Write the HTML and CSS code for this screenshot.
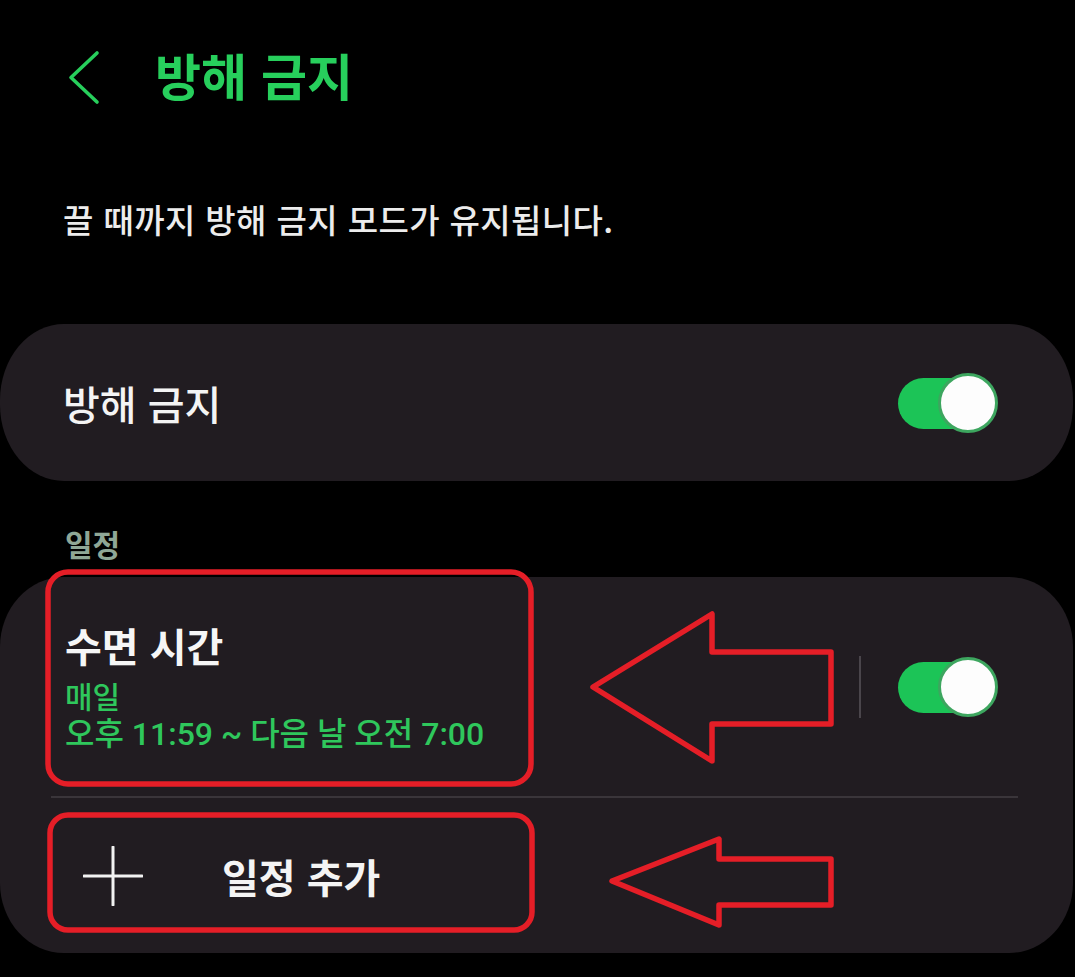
FILE: index.html
```html
<!DOCTYPE html>
<html lang="ko">
<head>
<meta charset="utf-8">
<title>방해 금지</title>
<link rel="stylesheet" href="styles.css">
</head>
<body>
<div class="page">
  <header class="appbar">
    <svg class="back" width="36" height="56" viewBox="0 0 36 56">
      <path d="M33 3 L7 27.5 L33 52" fill="none" stroke="#27cf5c" stroke-width="3.6" stroke-linecap="round" stroke-linejoin="round"/>
    </svg>
    <h1 class="title">방해 금지</h1>
  </header>

  <p class="desc">끌 때까지 방해 금지 모드가 유지됩니다.</p>

  <section class="card card-main">
    <span class="main-label">방해 금지</span>
    <span class="toggle"><span class="thumb"></span></span>
  </section>

  <h2 class="section">일정</h2>

  <section class="card card-sched">
    <div class="sched-row">
      <div class="sched-text">
        <div class="sched-title">수면 시간</div>
        <div class="sched-days">매일</div>
        <div class="sched-time">오후 11:59 ~ 다음 날 오전 7:00</div>
      </div>
      <div class="sched-ctrl">
        <span class="vdiv"></span>
        <span class="toggle"><span class="thumb"></span></span>
      </div>
    </div>
    <div class="hdiv"></div>
    <div class="add-row">
      <svg class="plus" width="60" height="60" viewBox="0 0 60 60">
        <path d="M30 1 V59 M1 30 H59" stroke="#f2f2f2" stroke-width="3" stroke-linecap="round"/>
      </svg>
      <span class="add-label">일정 추가</span>
    </div>
  </section>

  <svg class="annot" width="1075" height="977" viewBox="0 0 1075 977">
    <g fill="none" stroke="#e51e27" stroke-width="5.5" stroke-linejoin="round">
      <rect x="48" y="572" width="483" height="212" rx="20"/>
      <rect x="50" y="815" width="482" height="115" rx="18"/>
      <polygon points="593,687 712,614 712,652 831,652 831,724 712,724 712,761"/>
      <polygon points="612,881 719,839 719,859 831,859 831,905 719,905 719,925"/>
    </g>
  </svg>
</div>
</body>
</html>
```

FILE: styles.css
```css
html, body {
  margin: 0;
  padding: 0;
  background: #000;
}
body {
  font-family: Roboto, "Noto Sans CJK KR", sans-serif;
  color: #f2f2f2;
}
.page {
  position: relative;
  width: 1075px;
  height: 977px;
  overflow: hidden;
}
.appbar {
  height: 156px;
  display: flex;
  align-items: center;
  padding-left: 64px;
}
.back {
  display: block;
  flex: none;
}
.title {
  margin: 0 0 8px 55px;
  font-family: "Noto Sans CJK KR", sans-serif;
  font-size: 50px;
  font-weight: 700;
  letter-spacing: 0;
  color: #27cf5c;
  line-height: 56px;
}
.desc {
  margin: 41px 0 0 0;
  padding-left: 63px;
  font-family: "Noto Sans CJK KR", sans-serif;
  font-size: 33px;
  letter-spacing: 0.4px;
  line-height: 44px;
  font-weight: 500;
  color: #ececec;
}
.card {
  background: #211c21;
  width: 1073px;
  box-sizing: border-box;
}
.card-main {
  margin-top: 83px;
  height: 157px;
  border-radius: 64px / 76px;
  display: flex;
  align-items: center;
  justify-content: space-between;
  padding: 0 75px 0 63px;
}
.main-label {
  font-family: "Noto Sans CJK KR", sans-serif;
  font-size: 40px;
  font-weight: 500;
  color: #f4f4f4;
}
.toggle {
  position: relative;
  display: block;
  width: 100px;
  height: 60px;
  flex: none;
}
.toggle::before {
  content: "";
  position: absolute;
  left: 0;
  top: 5px;
  width: 92px;
  height: 51px;
  border-radius: 26px;
  background: #1cc457;
}
.thumb {
  position: absolute;
  right: 0;
  top: 0;
  width: 54px;
  height: 54px;
  border-radius: 50%;
  background: #fdfdfd;
  border: 3px solid #3da65f;
}
.section {
  margin: 42px 0 0 0;
  padding-left: 65px;
  font-family: "Noto Sans CJK KR", sans-serif;
  font-size: 30px;
  font-weight: 700;
  line-height: 40px;
  color: #8fa796;
}
.card-sched {
  margin-top: 14px;
  height: 376px;
  border-radius: 64px / 70px;
  display: flex;
  flex-direction: column;
}
.sched-row {
  height: 219px;
  display: flex;
  align-items: center;
  justify-content: space-between;
  padding: 0 75px 0 65px;
  box-sizing: border-box;
}
.sched-text {
  display: flex;
  flex-direction: column;
  font-family: Roboto, "Noto Sans CJK KR", sans-serif;
}
.sched-title {
  font-family: "Noto Sans CJK KR", sans-serif;
  font-size: 40px;
  font-weight: 700;
  line-height: 48px;
  color: #f6f6f6;
}
.sched-days,
.sched-time {
  font-weight: 500;
  line-height: 38px;
  color: #2fc75c;
}
.sched-days {
  margin-top: 7px;
  font-size: 30px;
  font-family: "Noto Sans CJK KR", sans-serif;
}
.sched-time {
  margin-top: 1px;
  font-size: 32px;
}
.sched-ctrl {
  display: flex;
  align-items: center;
  gap: 37px;
}
.vdiv {
  display: block;
  width: 2px;
  height: 62px;
  background: #4a454b;
}
.hdiv {
  height: 2px;
  margin: 0 55px 0 51px;
  background: #3a353a;
}
.add-row {
  flex: 1;
  display: flex;
  align-items: center;
  padding-left: 83px;
}
.plus {
  display: block;
  flex: none;
}
.add-label {
  margin-left: 79px;
  font-family: "Noto Sans CJK KR", sans-serif;
  font-size: 40px;
  font-weight: 700;
  color: #f4f4f4;
}
.annot {
  position: absolute;
  left: 0;
  top: 0;
  pointer-events: none;
}
```
